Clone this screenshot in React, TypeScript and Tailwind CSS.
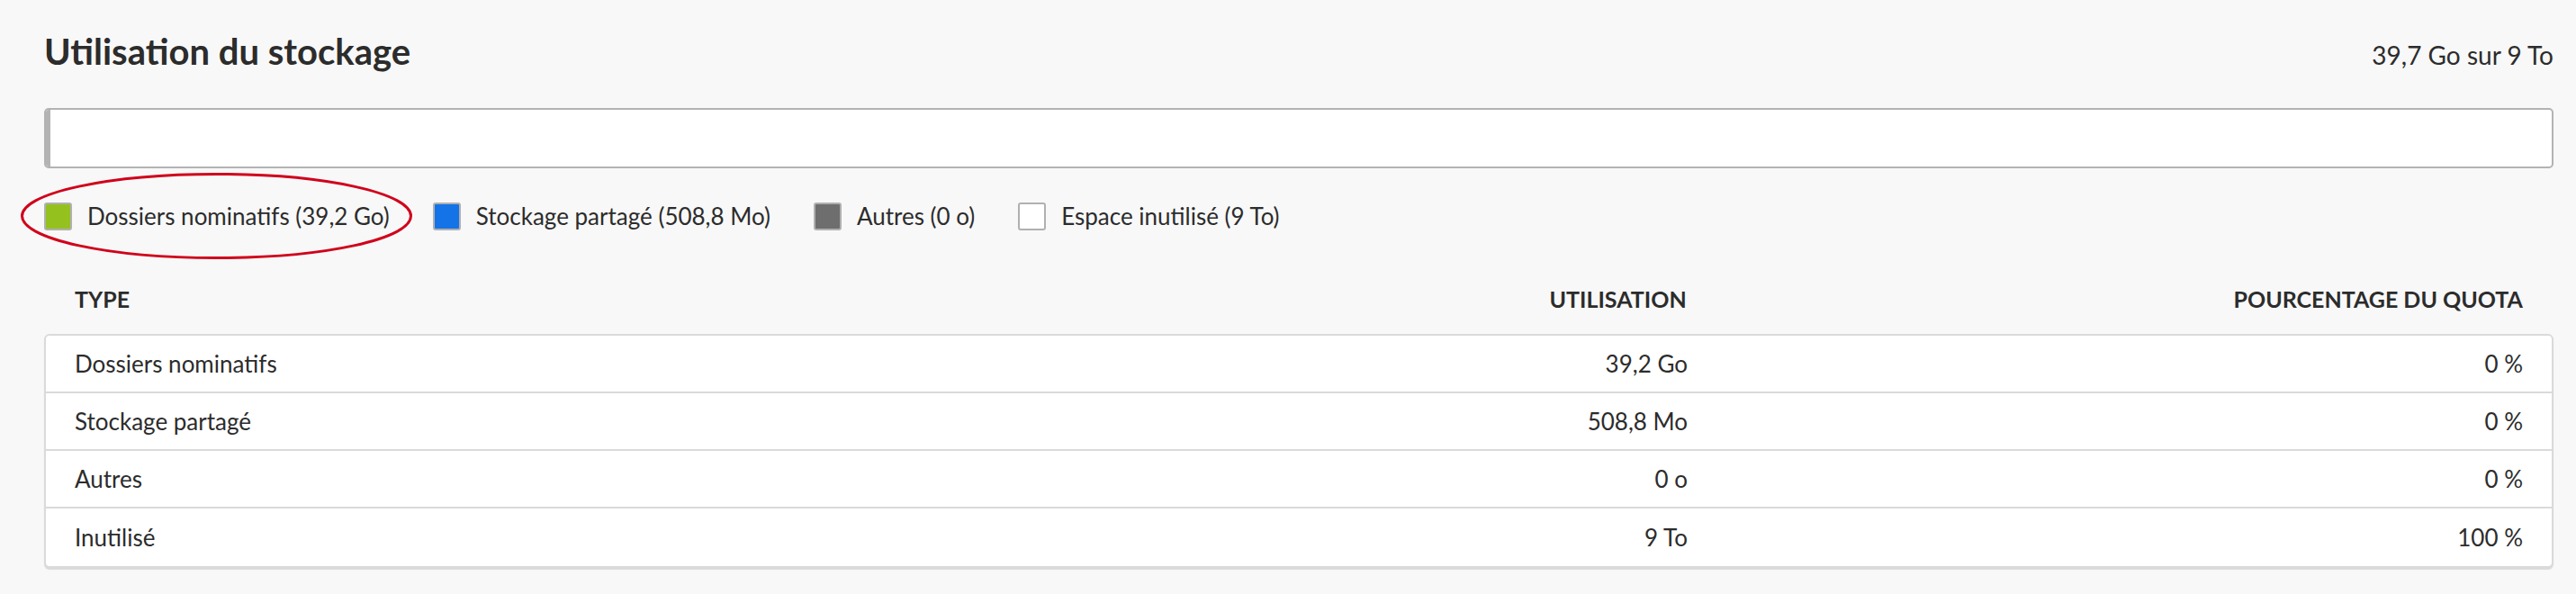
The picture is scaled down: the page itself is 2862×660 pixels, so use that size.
import React from 'react'

const legend = [
  { label: 'Dossiers nominatifs (39,2 Go)', color: 'bg-[#95c11f]' },
  { label: 'Stockage partagé (508,8 Mo)', color: 'bg-[#1473e6]' },
  { label: 'Autres (0 o)', color: 'bg-[#6e6e6e]' },
  { label: 'Espace inutilisé (9 To)', color: 'bg-white' },
]

const rows = [
  { type: 'Dossiers nominatifs', usage: '39,2 Go', pct: '0 %' },
  { type: 'Stockage partagé', usage: '508,8 Mo', pct: '0 %' },
  { type: 'Autres', usage: '0 o', pct: '0 %' },
  { type: 'Inutilisé', usage: '9 To', pct: '100 %' },
]

export default function App() {
  return (
    <div className="min-h-screen w-full bg-[#f8f8f8] pl-[49px] pr-[25px] pt-[33px] font-['Lato',sans-serif] text-[#2c2c2c]">
      {/* heading */}
      <div className="flex h-[48px] items-baseline justify-between">
        <h1 className="text-[40px] leading-[48px] font-bold">Utilisation du stockage</h1>
        <span className="text-[28px] leading-[48px]">39,7 Go sur 9 To</span>
      </div>

      {/* usage bar */}
      <div className="mt-[39px] flex h-[67px] overflow-hidden rounded-[5px] border-2 border-[#b3b3b3] bg-white">
        <div className="w-[5px] bg-[#b3b3b3]" />
        <div className="flex-1" />
      </div>

      {/* legend */}
      <div className="relative mt-[38px] flex h-[31px] items-center gap-[48px]">
        <svg
          className="pointer-events-none absolute left-[-27px] top-[-34px]"
          width="437"
          height="98"
          viewBox="0 0 437 98"
        >
          <ellipse cx="218.5" cy="49" rx="216" ry="46.5" fill="none" stroke="#d0021b" strokeWidth="3" />
        </svg>
        {legend.map((item) => (
          <div key={item.label} className="flex items-center gap-[17px]">
            <span className={`h-[31px] w-[31px] rounded-[3px] border-2 border-[#b0b0b0] ${item.color}`} />
            <span className="text-[26px] leading-[31px]">{item.label}</span>
          </div>
        ))}
      </div>

      {/* table header */}
      <div className="mt-[61px] grid grid-cols-3 text-[25px] font-bold uppercase leading-[30px]">
        <div className="px-[34px]">Type</div>
        <div className="px-[34px] text-right">Utilisation</div>
        <div className="px-[34px] text-right">Pourcentage du quota</div>
      </div>

      {/* table body */}
      <div className="mt-[24px] overflow-hidden rounded-[6px] border-2 border-[#dadada] bg-white shadow-[0_2px_1px_rgba(0,0,0,0.12)]">
        {rows.map((row, i) => (
          <div
            key={row.type}
            className={`grid h-[64px] grid-cols-3 items-center text-[26px] ${i < rows.length - 1 ? 'border-b-2 border-[#dadada]' : ''}`}
          >
            <div className="px-[32px]">{row.type}</div>
            <div className="px-[32px] text-right">{row.usage}</div>
            <div className="px-[32px] text-right">{row.pct}</div>
          </div>
        ))}
      </div>
    </div>
  )
}
